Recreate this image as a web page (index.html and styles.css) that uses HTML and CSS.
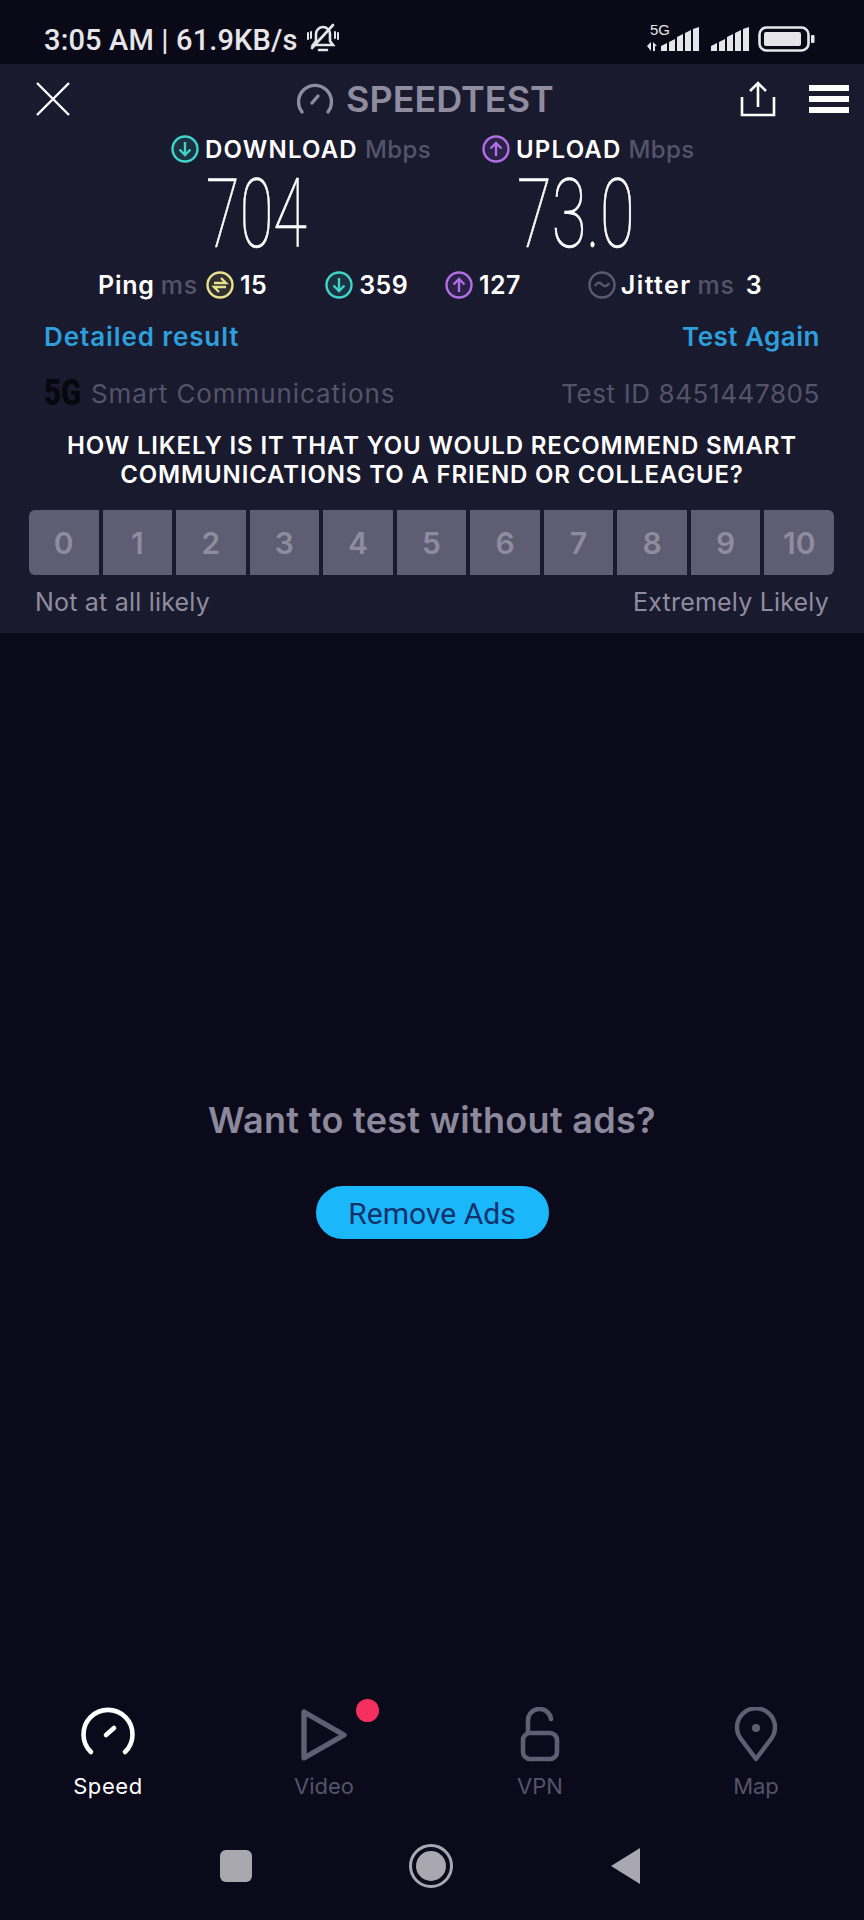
FILE: index.html
```html
<!DOCTYPE html>
<html lang="en">
<head>
    <meta charset="UTF-8">
    <meta name="viewport" content="width=device-width, initial-scale=1.0">
    <title>Speedtest Result</title>
    <link rel="stylesheet" href="styles.css">
</head>
<body>
<div class="screen">
    <div class="status-bar">
        <span class="status-text">3:05 AM | 61.9KB/s</span>
        <svg class="status-bell" width="36" height="30" viewBox="0 0 36 30" fill="none" stroke="#e6e6ea" stroke-width="2.6" stroke-linecap="round">
            <path d="M8 22h20l-3-4v-7a7 7 0 0 0-14 0v7z"/>
            <path d="M14 27h8"/>
            <path d="M7 25L28 2"/>
            <path d="M3 10v6M6 9v6M30 9v6M33 10v6" stroke-width="2"/>
        </svg>
        <div class="status-icons">
            <div class="signal-5g">
                <span class="signal-label">5G</span>
                <svg width="54" height="25" viewBox="0 0 54 25" fill="#e6e6ea">
                    <path d="M0 19l4-4v9zM6 15l4 4h-2v5H6z"/>
                    <path d="M14 19l6-3v8h-6zM22 15l6-3v12h-6zM30 10l6-3v17h-6zM38 6l6-3v21h-6zM46 2l6-2v24h-6z"/>
                </svg>
            </div>
            <svg width="39" height="25" viewBox="0 0 39 25" fill="#e6e6ea">
                <path d="M0 19l6-3v8H0zM8 15l6-3v12H8zM16 10l6-3v17h-6zM24 6l6-3v21h-6zM32 2l6-2v24h-6z"/>
            </svg>
            <svg class="battery" width="57" height="26" viewBox="0 0 57 26" fill="none">
                <rect x="1.500" y="1.500" width="49" height="23" rx="7" stroke="#e6e6ea" stroke-width="2.600"/>
                <rect x="6" y="6" width="37" height="14" rx="2" fill="#e6e6ea"/>
                <rect x="53" y="9" width="3.500" height="8" rx="1" fill="#e6e6ea"/>
            </svg>
        </div>
    </div>

    <section class="result-panel">
        <div class="toolbar">
            <svg class="close-icon" width="34" height="34" viewBox="0 0 34 34" stroke="#fff" stroke-width="2.4"><path d="M1 1l32 32M33 1L1 33"/></svg>
            <div class="brand">
                <svg width="36" height="32" viewBox="0 0 36 32" fill="none" stroke="#8f8c9f" stroke-width="3.4" stroke-linecap="round">
                    <path d="M5 29a16.500 16.500 0 1 1 26 0"/>
                    <path d="M15 20l6-7"/>
                </svg>
                <span class="brand-name">SPEEDTEST</span>
            </div>
            <svg class="share-icon" width="36" height="36" viewBox="0 0 36 36" fill="none" stroke="#fff" stroke-width="2.6">
                <path d="M2 16v18h32V16"/>
                <path d="M18 26V3M10 10l8-8 8 8"/>
            </svg>
            <div class="menu-icon"><i></i><i></i><i></i></div>
        </div>

        <div class="speed-row">
            <div class="speed-col speed-down">
                <div class="speed-label">
                    <svg class="round-icon" viewBox="0 0 28 28" fill="#1c3240" stroke="#41d3c9" stroke-width="2.400"><circle cx="14" cy="14" r="12.500"/><path d="M14 7v13M8.500 14.500L14 20l5.500-5.500" fill="none"/></svg>
                    <span class="speed-name">DOWNLOAD</span><span class="speed-unit">Mbps</span>
                </div>
                <div class="speed-value value-down"><span>704</span></div>
            </div>
            <div class="speed-col speed-up">
                <div class="speed-label">
                    <svg class="round-icon" viewBox="0 0 28 28" fill="#2b2048" stroke="#b06fe4" stroke-width="2.400"><circle cx="14" cy="14" r="12.500"/><path d="M14 21V8M8.500 13.500L14 8l5.500 5.500" fill="none"/></svg>
                    <span class="speed-name">UPLOAD</span><span class="speed-unit">Mbps</span>
                </div>
                <div class="speed-value value-up"><span>73.0</span></div>
            </div>
        </div>

        <div class="stats-row">
            <span class="stat-name">Ping</span><span class="stat-unit">ms</span>
            <svg class="round-icon icon-ping" viewBox="0 0 28 28" fill="#322f33" stroke="#e9e28c" stroke-width="2.400"><circle cx="14" cy="14" r="12.500"/><path d="M8 12h12l-5-5M20 16H8l5 5" fill="none"/></svg>
            <span class="stat-num">15</span>
            <svg class="round-icon icon-stat-down" viewBox="0 0 28 28" fill="#1c3240" stroke="#41d3c9" stroke-width="2.400"><circle cx="14" cy="14" r="12.500"/><path d="M14 7v13M8.500 14.500L14 20l5.500-5.500" fill="none"/></svg>
            <span class="stat-num">359</span>
            <svg class="round-icon icon-stat-up" viewBox="0 0 28 28" fill="#2b2048" stroke="#b06fe4" stroke-width="2.400"><circle cx="14" cy="14" r="12.500"/><path d="M14 21V8M8.500 13.500L14 8l5.500 5.500" fill="none"/></svg>
            <span class="stat-num">127</span>
            <svg class="round-icon icon-jitter" viewBox="0 0 28 28" fill="none" stroke="#5b596e" stroke-width="2.400"><circle cx="14" cy="14" r="12.500"/><path d="M7 15c2-4 4.500-4 7-1.500s5 2.500 7-1.500"/></svg>
            <span class="stat-name">Jitter</span><span class="stat-unit">ms</span>
            <span class="stat-num stat-last">3</span>
        </div>

        <div class="link-row">
            <a class="blue-link link-detail">Detailed result</a>
            <a class="blue-link">Test Again</a>
        </div>

        <div class="carrier-row">
            <div class="carrier">
                <span class="carrier-logo">5G</span>
                <span>Smart Communications</span>
            </div>
            <span class="test-id">Test ID 8451447805</span>
        </div>

        <p class="question">HOW LIKELY IS IT THAT YOU WOULD RECOMMEND SMART<br>COMMUNICATIONS TO A FRIEND OR COLLEAGUE?</p>

        <div class="scale">
            <div class="scale-item">0</div>
            <div class="scale-item">1</div>
            <div class="scale-item">2</div>
            <div class="scale-item">3</div>
            <div class="scale-item">4</div>
            <div class="scale-item">5</div>
            <div class="scale-item">6</div>
            <div class="scale-item">7</div>
            <div class="scale-item">8</div>
            <div class="scale-item">9</div>
            <div class="scale-item">10</div>
        </div>
        <div class="scale-labels">
            <span>Not at all likely</span>
            <span>Extremely Likely</span>
        </div>
    </section>

    <section class="ad-area">
        <h2 class="ad-title">Want to test without ads?</h2>
        <button class="remove-ads">Remove Ads</button>
    </section>

    <nav class="tabs">
        <div class="tab tab-active">
            <svg class="tab-gauge" width="56" height="56" viewBox="0 0 56 56" fill="none" stroke="#fff" stroke-width="4.600" stroke-linecap="round">
                <path d="M11 47a24.500 24.500 0 1 1 34 0"/>
                <path d="M26 30l8-7"/>
            </svg>
            <span>Speed</span>
        </div>
        <div class="tab">
            <svg width="56" height="56" viewBox="0 0 56 56" fill="none" stroke="#605e72" stroke-width="5.400" stroke-linejoin="round">
                <path d="M8 8l40 23-40 23z" transform="translate(0 -3)"/>
            </svg>
            <span>Video</span>
            <i class="red-dot"></i>
        </div>
        <div class="tab">
            <svg width="56" height="56" viewBox="0 0 56 56" fill="none" stroke="#605e72" stroke-width="4.600" stroke-linecap="round">
                <rect x="11" y="26" width="34" height="26" rx="7"/>
                <path d="M16 25V15a11.500 11.500 0 0 1 23-3"/>
            </svg>
            <span>VPN</span>
        </div>
        <div class="tab">
            <svg width="56" height="56" viewBox="0 0 56 56" fill="none" stroke="#605e72" stroke-width="4.400">
                <path d="M28 52L13 32a19 19 0 1 1 30 0z" stroke-linejoin="round"/>
                <circle cx="28" cy="21" r="4" fill="#605e72" stroke="none"/>
            </svg>
            <span>Map</span>
        </div>
    </nav>

    <div class="system-nav">
        <div class="sys-square"></div>
        <div class="sys-home"></div>
        <svg width="32" height="38" viewBox="0 0 32 38" fill="#a9a8b0"><path d="M1 19L30 1v36z"/></svg>
    </div>
</div>
</body>
</html>
```

FILE: styles.css
```css
body {
    margin: 0;
    background-color: #0a0a1a;
    font-family: Inter, "Open Sans", sans-serif;
    color: #fff;
}
.screen {
    width: 864px;
    height: 1920px;
    display: flex;
    flex-direction: column;
    overflow: hidden;
}

/* status bar */
.status-bar {
    height: 64px;
    padding: 0 44px;
    box-sizing: border-box;
    display: flex;
    align-items: center;
    background-color: #090917;
    color: #e6e6ea;
    font-family: Roboto, sans-serif;
}
.status-text {
    font-size: 29px;
    font-weight: 500;
    line-height: 34px;
    margin-top: 15px;
    letter-spacing: 0.15px;
}
.status-bell {
    margin: 12px 0 0 7px;
}
.status-icons {
    margin-left: auto;
    margin-right: 5px;
    display: flex;
    align-items: flex-end;
    gap: 10px;
    padding-top: 14px;
}
.signal-5g {
    position: relative;
    height: 25px;
}
.signal-label {
    position: absolute;
    left: 3px;
    top: -5px;
    font-family: "Liberation Sans", sans-serif;
    font-size: 15px;
    line-height: 16px;
}
.battery {
    margin-left: -2px;
}

/* result panel */
.result-panel {
    height: 569px;
    background-color: #1a1a2e;
    box-sizing: border-box;
}
.toolbar {
    height: 68px;
    box-sizing: border-box;
    padding: 2px 15px 0 36px;
    display: flex;
    align-items: center;
}
.close-icon {
    margin-right: 227px;
}
.brand {
    display: flex;
    align-items: center;
    gap: 13px;
}
.brand-name {
    font-size: 36px;
    font-weight: 600;
    line-height: 40px;
    color: #8f8c9f;
}
.share-icon {
    margin-left: auto;
    margin-right: 33px;
}
.menu-icon {
    width: 40px;
    display: flex;
    flex-direction: column;
    gap: 5px;
}
.menu-icon i {
    height: 6px;
    background-color: #fff;
}

.speed-row {
    display: flex;
    padding-left: 171px;
}
.speed-col {
    width: 311px;
}
.speed-label {
    display: flex;
    align-items: center;
    height: 34px;
    font-size: 24px;
    letter-spacing: 1.2px;
}
.round-icon {
    width: 28px;
    height: 28px;
    flex: none;
}
.speed-name {
    margin-left: 6px;
    font-weight: 600;
}
.speed-unit {
    margin-left: 7px;
    color: #55536a;
    font-weight: 500;
    letter-spacing: 0.4px;
}
.speed-value {
    height: 94px;
    font-family: Roboto, sans-serif;
    font-weight: 100;
    font-size: 96px;
    line-height: 96px;
    -webkit-text-stroke: 0.6px #fff;
}
.speed-value span {
    display: inline-block;
    transform-origin: left center;
}
.value-down {
    padding-left: 35px;
}
.value-down span {
    transform: scaleX(0.64);
}
.value-up {
    padding-left: 35px;
}
.value-up span {
    transform: scaleX(0.66);
}

.stats-row {
    height: 50px;
    padding: 0 0 0 98px;
    display: flex;
    align-items: center;
    font-size: 25px;
    letter-spacing: 0.4px;
}
.stat-name {
    font-weight: 600;
    letter-spacing: 0.8px;
}
.stat-unit {
    margin-left: 6px;
    color: #55536a;
    font-weight: 500;
    letter-spacing: 0.8px;
}
.stat-num {
    margin-left: 6px;
    font-weight: 600;
}
.icon-ping {
    margin-left: 8px;
}
.icon-stat-down {
    margin-left: 58px;
}
.icon-stat-up {
    margin-left: 37px;
}
.icon-jitter {
    margin-left: 67px;
}
.icon-jitter + .stat-name {
    margin-left: 5px;
    letter-spacing: 1.4px;
}
.stat-last {
    margin-left: 11px;
}

.link-row {
    display: flex;
    justify-content: space-between;
    padding: 0 44px;
    height: 34px;
    margin-top: 9px;
    align-items: center;
}
.blue-link {
    font-size: 26px;
    font-weight: 600;
    letter-spacing: 0.5px;
    color: #2d9fdd;
}
.link-detail {
    letter-spacing: 0.9px;
}

.carrier-row {
    display: flex;
    justify-content: space-between;
    align-items: center;
    padding: 0 44px;
    height: 34px;
    margin-top: 23px;
    font-size: 26px;
    letter-spacing: 0.9px;
    color: #55536a;
}
.carrier {
    display: flex;
    align-items: center;
}
.carrier-logo {
    width: 47px;
    flex: none;
    font-family: Roboto, sans-serif;
    font-weight: 900;
    font-size: 36px;
    letter-spacing: 0;
    color: #07070d;
    transform: scaleX(0.82);
    transform-origin: left center;
}
.test-id {
    letter-spacing: 0.6px;
}

.question {
    margin: 21px 0 0;
    text-align: center;
    font-size: 24px;
    font-weight: 600;
    letter-spacing: 0.85px;
    line-height: 29px;
}

.scale {
    margin: 21px 30px 0 29px;
    display: grid;
    grid-template-columns: repeat(11, 1fr);
    gap: 4px;
}
.scale-item {
    height: 65px;
    background-color: #5f5d73;
    color: #8f8c9f;
    font-size: 30px;
    font-weight: 600;
    display: flex;
    align-items: center;
    justify-content: center;
}
.scale-item:first-child {
    border-radius: 6px 0 0 6px;
}
.scale-item:last-child {
    border-radius: 0 6px 6px 0;
}
.scale-labels {
    display: flex;
    justify-content: space-between;
    padding: 0 35px;
    margin-top: 10px;
    height: 34px;
    align-items: center;
    font-size: 25px;
    letter-spacing: 0.2px;
    color: #8f8c9f;
}

/* ad area */
.ad-area {
    flex: 1;
    display: flex;
    flex-direction: column;
    align-items: center;
    padding-top: 465px;
}
.ad-title {
    margin: 0;
    font-size: 36px;
    font-weight: 600;
    letter-spacing: 0.3px;
    line-height: 44px;
    color: #8c899c;
}
.remove-ads {
    margin-top: 44px;
    width: 233px;
    height: 53px;
    border: none;
    border-radius: 27px;
    background-color: #1ab8fb;
    color: #12306a;
    font-family: Roboto, sans-serif;
    font-size: 30px;
    padding: 2px 0 0;
}

/* bottom tabs */
.tabs {
    display: grid;
    grid-template-columns: repeat(4, 216px);
}
.tab {
    position: relative;
    display: flex;
    flex-direction: column;
    align-items: center;
    height: 109px;
    font-size: 22px;
    color: #55536a;
}
.tab svg {
    margin-top: 4px;
}
.tab .tab-gauge {
    margin: 2px 0 2px;
}
.tab span {
    margin-top: 9px;
    line-height: 28px;
}
.tab-active {
    color: #fff;
    letter-spacing: 0.6px;
}
.red-dot {
    position: absolute;
    left: 140px;
    top: -4px;
    width: 23px;
    height: 23px;
    border-radius: 50%;
    background-color: #f5305f;
}

.system-nav {
    height: 108px;
    box-sizing: border-box;
    display: flex;
    align-items: center;
    padding: 0 222px 0 220px;
    justify-content: space-between;
}
.sys-square {
    width: 32px;
    height: 32px;
    border-radius: 6px;
    background-color: #a9a8b0;
}
.sys-home {
    width: 30px;
    height: 30px;
    border-radius: 50%;
    background-color: #a9a8b0;
    border: 4px solid #0a0a1a;
    outline: 3px solid #a9a8b0;
}
```
